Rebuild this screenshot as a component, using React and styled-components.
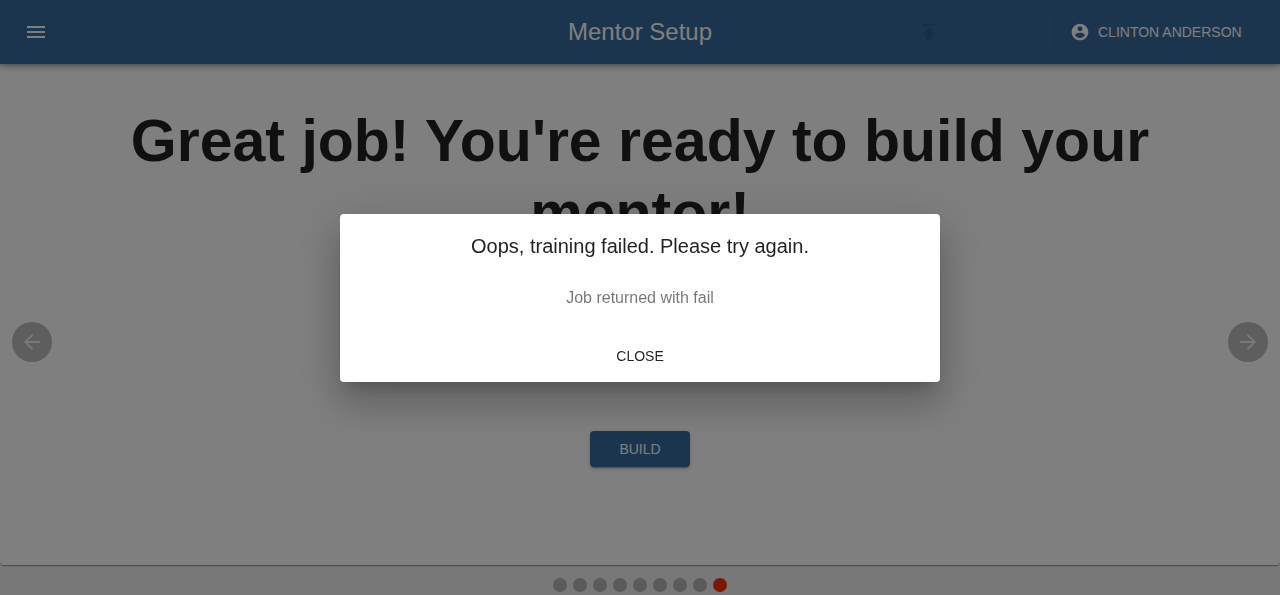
import React from "react";
import styled, { createGlobalStyle } from "styled-components";

const GlobalStyle = createGlobalStyle`
  *, *::before, *::after { box-sizing: border-box; }
  body {
    margin: 0;
    background: #f0f0f0;
    color: rgba(0, 0, 0, 0.87);
    font-family: "Liberation Sans", Arial, sans-serif;
    font-size: 16px;
    line-height: 24px;
  }
  button { font-family: inherit; border: 0; margin: 0; cursor: pointer; }
`;

const Svg = styled.svg`
  display: block;
  flex: none;
  width: ${(p) => p.$size}px;
  height: ${(p) => p.$size}px;
  fill: currentColor;
`;

const iconPaths = {
  menu: "M3 18h18v-2H3v2zm0-5h18v-2H3v2zm0-7v2h18V6H3z",
  publish:
    "M5 5c0 .55.45 1 1 1h12c.55 0 1-.45 1-1s-.45-1-1-1H6c-.55 0-1 .45-1 1zm2.41 9H9v5c0 .55.45 1 1 1h4c.55 0 1-.45 1-1v-5h1.59c.89 0 1.34-1.08.71-1.71L12.71 7.7c-.39-.39-1.02-.39-1.41 0l-4.59 4.59c-.63.63-.19 1.71.7 1.71z",
  account:
    "M12 2C6.48 2 2 6.48 2 12s4.48 10 10 10 10-4.48 10-10S17.52 2 12 2zm0 3c1.66 0 3 1.34 3 3s-1.34 3-3 3-3-1.34-3-3 1.34-3 3-3zm0 14.2c-2.5 0-4.71-1.28-6-3.22.03-1.99 4-3.08 6-3.08 1.99 0 5.97 1.09 6 3.08-1.29 1.94-3.5 3.22-6 3.22z",
  back: "M20 11H7.83l5.59-5.59L12 4l-8 8 8 8 1.41-1.41L7.83 13H20v-2z",
  forward: "M12 4l-1.41 1.41L16.17 11H4v2h12.17l-5.58 5.59L12 20l8-8z",
};

function Icon({ name, size = 24 }) {
  return (
    <Svg viewBox="0 0 24 24" $size={size} aria-hidden="true">
      <path d={iconPaths[name]} />
    </Svg>
  );
}

const Page = styled.div`
  display: flex;
  flex-direction: column;
  min-height: 100vh;
`;

const AppBar = styled.header`
  position: relative;
  z-index: 1;
  display: grid;
  grid-template-columns: 1fr auto 1fr;
  align-items: center;
  height: 64px;
  padding: 0 24px;
  background: #366a9c;
  color: #fff;
  box-shadow: 0 2px 4px -1px rgba(0, 0, 0, 0.2), 0 4px 5px 0 rgba(0, 0, 0, 0.14),
    0 1px 10px 0 rgba(0, 0, 0, 0.12);
`;

const MenuButton = styled.button`
  justify-self: start;
  padding: 0;
  background: none;
  color: inherit;
`;

const Title = styled.h1`
  margin: 0;
  font-size: 24px;
  font-weight: 400;
  line-height: 32px;
`;

const BarActions = styled.div`
  display: flex;
  justify-content: flex-end;
  gap: 8px;
`;

const PublishButton = styled.button`
  display: flex;
  align-items: center;
  justify-content: center;
  width: 245px;
  height: 36px;
  padding: 0 7px 0 0;
  border: 1px solid rgba(0, 0, 0, 0.04);
  border-radius: 4px;
  background: none;
  color: rgba(0, 0, 0, 0.12);
`;

const UserButton = styled.button`
  display: flex;
  align-items: center;
  gap: 8px;
  min-width: 193px;
  height: 36px;
  padding: 0 7px;
  background: none;
  color: inherit;
  font-size: 14px;
  line-height: 24px;
  text-transform: uppercase;
  white-space: nowrap;
`;

const Slide = styled.main`
  display: grid;
  grid-template-columns: 64px 1fr 64px;
  flex: 1;
  background: #fff;
  border-radius: 4px;
  box-shadow: 0 2px 1px -1px rgba(0, 0, 0, 0.2), 0 1px 1px 0 rgba(0, 0, 0, 0.14),
    0 1px 3px 0 rgba(0, 0, 0, 0.12);
`;

const ArrowCell = styled.div`
  display: flex;
  align-items: center;
  justify-content: center;
  padding-top: 55px;
`;

const ArrowButton = styled.button`
  display: flex;
  align-items: center;
  justify-content: center;
  width: 40px;
  height: 40px;
  padding: 0;
  border-radius: 50%;
  background: #bdbdbd;
  color: #f0f0f0;
`;

const SlideContent = styled.section`
  display: flex;
  flex-direction: column;
  align-items: center;
  gap: 182px;
  padding: 41px 0 40px;
`;

const Headline = styled.h2`
  margin: 0;
  font-size: 59px;
  font-weight: 700;
  line-height: 72px;
  text-align: center;
`;

const BuildButton = styled.button`
  width: 100px;
  height: 36px;
  border-radius: 4px;
  background: #366a9c;
  color: #fff;
  font-size: 14px;
  line-height: 24px;
  text-transform: uppercase;
  box-shadow: 0 3px 1px -2px rgba(0, 0, 0, 0.2), 0 2px 2px 0 rgba(0, 0, 0, 0.14),
    0 1px 5px 0 rgba(0, 0, 0, 0.12);
`;

const Dots = styled.nav`
  display: flex;
  justify-content: center;
  gap: 6px;
  padding: 13px 0 3px;
`;

const Dot = styled.button`
  width: 14px;
  height: 14px;
  padding: 0;
  border-radius: 50%;
  background: ${(p) => (p.$active ? "#f03000" : "#b4b4b4")};
`;

const Backdrop = styled.div`
  position: fixed;
  inset: 0;
  z-index: 2;
  display: flex;
  align-items: center;
  justify-content: center;
  background: rgba(0, 0, 0, 0.5);
`;

const Dialog = styled.div`
  width: 600px;
  max-width: calc(100% - 64px);
  border-radius: 4px;
  background: #fff;
  text-align: center;
  box-shadow: 0 11px 15px -7px rgba(0, 0, 0, 0.2), 0 24px 38px 3px rgba(0, 0, 0, 0.14),
    0 9px 46px 8px rgba(0, 0, 0, 0.12);
`;

const DialogTitle = styled.h2`
  margin: 0;
  padding: 16px 24px;
  font-size: 20px;
  font-weight: 400;
  line-height: 32px;
`;

const DialogText = styled.p`
  margin: 0;
  padding: 8px 24px 20px;
  color: rgba(0, 0, 0, 0.54);
`;

const DialogActions = styled.div`
  display: flex;
  justify-content: center;
  padding: 8px;
`;

const CloseButton = styled.button`
  height: 36px;
  padding: 0 8px;
  background: none;
  color: rgba(0, 0, 0, 0.87);
  font-size: 14px;
  line-height: 24px;
  text-transform: uppercase;
`;

const slides = [1, 2, 3, 4, 5, 6, 7, 8, 9];
const currentSlide = 9;

export default function App() {
  return (
    <>
      <GlobalStyle />
      <Page>
        <AppBar>
          <MenuButton aria-label="Menu">
            <Icon name="menu" />
          </MenuButton>
          <Title>Mentor Setup</Title>
          <BarActions>
            <PublishButton aria-label="Uploads" disabled>
              <Icon name="publish" />
            </PublishButton>
            <UserButton>
              <Icon name="account" size={20} />
              Clinton Anderson
            </UserButton>
          </BarActions>
        </AppBar>
        <Slide>
          <ArrowCell>
            <ArrowButton aria-label="Previous">
              <Icon name="back" />
            </ArrowButton>
          </ArrowCell>
          <SlideContent>
            <Headline>Great job! You're ready to build your mentor!</Headline>
            <BuildButton>Build</BuildButton>
          </SlideContent>
          <ArrowCell>
            <ArrowButton aria-label="Next">
              <Icon name="forward" />
            </ArrowButton>
          </ArrowCell>
        </Slide>
        <Dots aria-label="Setup steps">
          {slides.map((n) => (
            <Dot key={n} $active={n === currentSlide} aria-label={`Step ${n}`} />
          ))}
        </Dots>
      </Page>
      <Backdrop>
        <Dialog role="dialog" aria-modal="true" aria-labelledby="dialog-title">
          <DialogTitle id="dialog-title">Oops, training failed. Please try again.</DialogTitle>
          <DialogText>Job returned with fail</DialogText>
          <DialogActions>
            <CloseButton>Close</CloseButton>
          </DialogActions>
        </Dialog>
      </Backdrop>
    </>
  );
}
